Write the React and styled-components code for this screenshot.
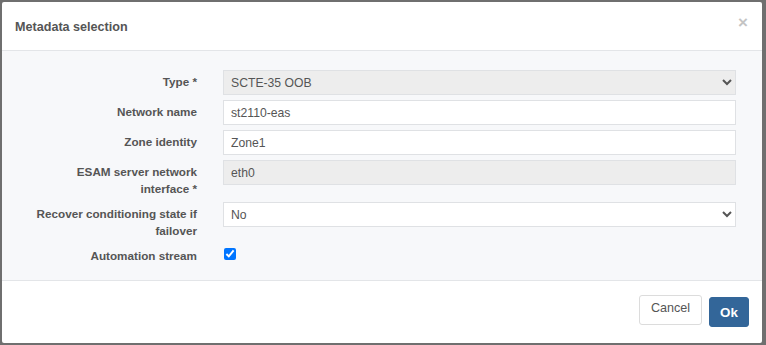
import React from "react";
import styled, { createGlobalStyle } from "styled-components";

const Global = createGlobalStyle`
  html, body { margin: 0; padding: 0; }
  body {
    background: #6f6f6f;
    font-family: "Liberation Sans", Arial, sans-serif;
    width: 766px;
    height: 345px;
    overflow: hidden;
  }
`;

const Backdrop = styled.div`
  width: 766px;
  height: 345px;
  box-sizing: border-box;
  padding: 2px 4px 2px 2px;
`;

const Modal = styled.div`
  width: 760px;
  height: 341px;
  background: #fff;
  border-radius: 2px;
  display: flex;
  flex-direction: column;
  overflow: hidden;
`;

const Header = styled.div`
  height: 49px;
  flex: none;
  display: flex;
  align-items: center;
  justify-content: space-between;
  padding: 2px 14px 0 13px;
  box-sizing: border-box;
  border-bottom: 1px solid #e3e5e8;
`;

const Title = styled.h4`
  margin: 0;
  font-size: 12.6px;
  font-weight: bold;
  color: #555;
`;

const Close = styled.button`
  border: 0;
  background: none;
  padding: 0;
  margin-top: -9px;
  color: #c4c4c4;
  font-size: 17px;
  line-height: 1;
  font-family: "Liberation Sans", Arial, sans-serif;
  font-weight: bold;
`;

const Body = styled.div`
  flex: none;
  height: 230px;
  box-sizing: border-box;
  background: #f7f8fa;
  border-bottom: 1px solid #e3e5e8;
  padding: 19px 26px 0 0;
  display: flex;
  flex-direction: column;
  gap: 5px;
`;

const Row = styled.div`
  display: flex;
  align-items: flex-start;
  gap: 26px;
`;

const Label = styled.label`
  width: 195px;
  flex: none;
  text-align: right;
  font-size: 11.7px;
  font-weight: bold;
  color: #555;
  line-height: 16.5px;
  padding: 4px 0 0 30px;
  box-sizing: border-box;
`;

const Field = styled.input`
  flex: 1;
  height: 25px;
  box-sizing: border-box;
  border: 1px solid #dfe1e4;
  border-radius: 0;
  background: ${(p) => (p.disabled ? "#ededed" : "#fff")};
  color: #555;
  font-family: "Liberation Sans", Arial, sans-serif;
  font-size: 12.2px;
  padding: 0 7px;
  outline: none;
`;

const Select = styled.select`
  flex: 1;
  height: 25px;
  box-sizing: border-box;
  border: 1px solid #dfe1e4;
  border-radius: 0;
  background: ${(p) => (p.disabled ? "#ededed" : "#fff")};
  color: #555;
  font-family: "Liberation Sans", Arial, sans-serif;
  font-size: 12.2px;
  padding: 0 3px;
  outline: none;
  opacity: 1;
`;

const Check = styled.input`
  margin: 4px 0 0 1px;
  width: 12px;
  height: 12px;
`;

const Footer = styled.div`
  flex: 1;
  display: flex;
  justify-content: flex-end;
  align-items: flex-start;
  gap: 7px;
  padding: 14px 13px 0 0;
`;

const Button = styled.button`
  height: 30px;
  box-sizing: border-box;
  border-radius: 3px;
  font-family: "Liberation Sans", Arial, sans-serif;
  font-size: ${(p) => (p.$primary ? "13.4px" : "12.6px")};
  cursor: pointer;
  border: 1px solid ${(p) => (p.$primary ? "#336699" : "#dcdcdc")};
  background: ${(p) => (p.$primary ? "#336699" : "#fff")};
  color: ${(p) => (p.$primary ? "#fff" : "#555")};
  font-weight: ${(p) => (p.$primary ? "bold" : "normal")};
  margin-top: ${(p) => (p.$primary ? "2px" : "0")};
  padding: ${(p) => (p.$primary ? "0 8px" : "0 10px 4px")};
  width: ${(p) => (p.$primary ? "40px" : "63px")};
`;

export default function App() {
  return (
    <>
      <Global />
      <Backdrop>
        <Modal>
          <Header>
            <Title>Metadata selection</Title>
            <Close aria-label="Close">×</Close>
          </Header>
          <Body>
            <Row>
              <Label>Type *</Label>
              <Select disabled defaultValue="scte">
                <option value="scte">SCTE-35 OOB</option>
              </Select>
            </Row>
            <Row>
              <Label>Network name</Label>
              <Field defaultValue="st2110-eas" />
            </Row>
            <Row>
              <Label>Zone identity</Label>
              <Field defaultValue="Zone1" />
            </Row>
            <Row>
              <Label>ESAM server network interface *</Label>
              <Field disabled defaultValue="eth0" />
            </Row>
            <Row>
              <Label>Recover conditioning state if failover</Label>
              <Select defaultValue="no">
                <option value="no">No</option>
                <option value="yes">Yes</option>
              </Select>
            </Row>
            <Row>
              <Label>Automation stream</Label>
              <Check type="checkbox" defaultChecked />
            </Row>
          </Body>
          <Footer>
            <Button>Cancel</Button>
            <Button $primary>Ok</Button>
          </Footer>
        </Modal>
      </Backdrop>
    </>
  );
}
